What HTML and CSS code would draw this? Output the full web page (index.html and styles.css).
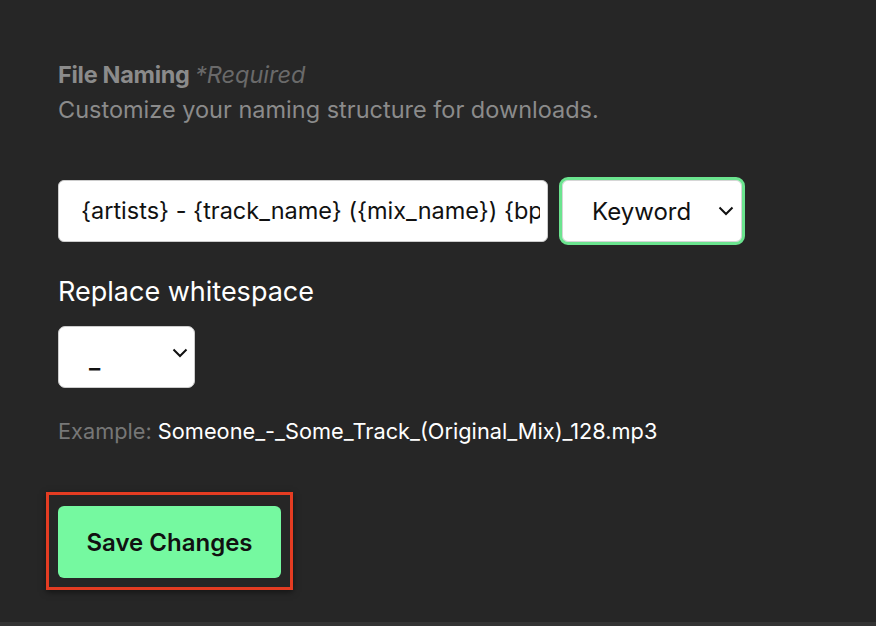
FILE: index.html
```
<!DOCTYPE html>
<html>
<head>
<meta charset="utf-8">
<link rel="stylesheet" href="styles.css">
</head>
<body>
<div class="page">
  <div class="title">File Naming <span class="req">*Required</span></div>
  <div class="sub">Customize your naming structure for downloads.</div>
  <div class="row">
    <div class="input"><div class="val">{artists} - {track_name} ({mix_name}) {bpm}</div></div>
    <div class="select keyword">
      <span>Keyword</span>
      <svg class="chev" width="16" height="10" viewBox="0 0 16 10"><polyline points="1.5,1.5 8,8 14.5,1.5" fill="none" stroke="#111" stroke-width="2"/></svg>
    </div>
  </div>
  <div class="label">Replace whitespace</div>
  <div class="select ws">
    <span class="us">_</span>
    <svg class="chev" width="16" height="10" viewBox="0 0 16 10"><polyline points="1.5,1.5 8,8 14.5,1.5" fill="none" stroke="#111" stroke-width="2"/></svg>
  </div>
  <div class="example"><span class="ex">Example:</span> Someone_-_Some_Track_(Original_Mix)_128.mp3</div>
  <div class="highlight"><button class="save">Save Changes</button></div>
</div>
<div class="strip"></div>
</body>
</html>
```
FILE: styles.css
```
html, body { margin: 0; padding: 0; }
body {
  background: #262626;
  font-family: Inter, "Liberation Sans", sans-serif;
  width: 876px;
  height: 626px;
  overflow: hidden;
}
.page {
  height: 622px;
  box-sizing: border-box;
  padding: 59px 0 0 58px;
}
.title {
  font-size: 23.5px;
  font-weight: 700;
  color: #8b8b8b;
  line-height: 32px;
  letter-spacing: -0.3px;
}
.req {
  font-weight: 400;
  font-style: italic;
  color: #6a6a6a;
  letter-spacing: 0;
}
.sub {
  font-size: 23.5px;
  color: #8b8b8b;
  line-height: 32px;
  margin-top: 3px;
}
.row {
  display: flex;
  align-items: center;
  gap: 11px;
  margin-top: 51px;
}
.input {
  width: 490px;
  height: 62px;
  box-sizing: border-box;
  background: #fff;
  border: 1px solid #ccc;
  border-radius: 6px;
  padding: 0 7px 0 22px;
  font-size: 23.5px;
  color: #111;
  line-height: 60px;
}
.val {
  white-space: nowrap;
  overflow: hidden;
}
.select {
  background: #fff;
  border-radius: 7px;
  box-sizing: border-box;
  display: flex;
  align-items: center;
  justify-content: space-between;
  color: #111;
}
.keyword {
  width: 186px;
  height: 68px;
  border: 3px solid #6be48f;
  box-shadow: inset 0 0 0 1px #d6d6d6;
  border-radius: 9px;
  padding: 0 8px 0 30px;
  font-size: 24px;
}
.label {
  font-size: 27px;
  color: #fff;
  line-height: 34px;
  margin-top: 30px;
}
.ws {
  width: 137px;
  height: 62px;
  border: 1px solid #ccc;
  padding: 0 6px 0 30px;
  margin-top: 17px;
  font-size: 24px;
}
.ws .us {
  position: relative;
  top: 2px;
  font-weight: 600;
}
.ws .chev { position: relative; top: -4px; }
.example {
  font-size: 21.75px;
  color: #fff;
  line-height: 28px;
  margin-top: 29px;
}
.ex { color: #777; }
.highlight {
  display: inline-block;
  margin-top: 47px;
  margin-left: -12px;
  border: 3px solid #e43c22;
  padding: 11px 9px 9px 9px;
  box-shadow: 0 2px 6px rgba(0,0,0,0.5);
}
.save {
  display: block;
  width: 223px;
  height: 72px;
  background: #75f9a0;
  border: none;
  border-radius: 6px;
  font-family: Inter, "Liberation Sans", sans-serif;
  font-size: 24px;
  font-weight: 600;
  color: #111;
  padding: 0;
}
.strip {
  height: 4px;
  background: #333;
}
```
